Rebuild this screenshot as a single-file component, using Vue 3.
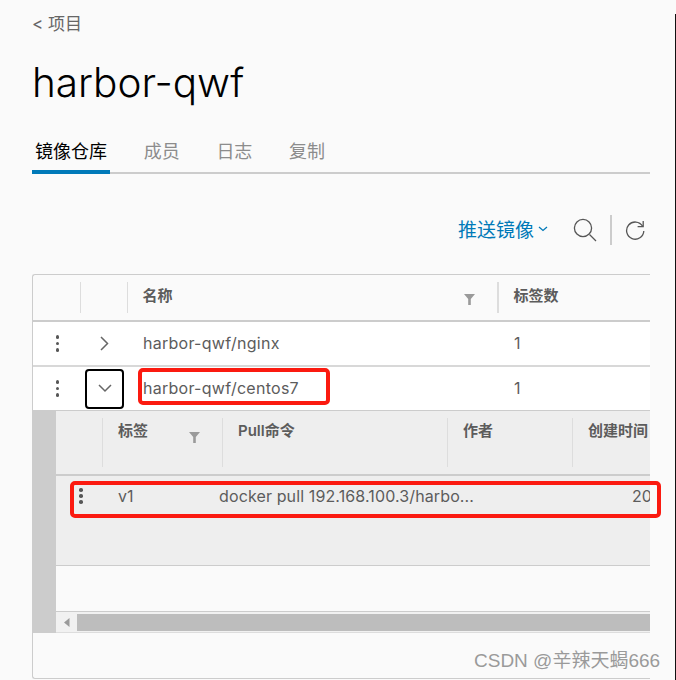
<script setup>
const tabs = ['镜像仓库', '成员', '日志', '复制']
const repos = [
  { name: 'harbor-qwf/nginx', tags: 1, open: false },
  { name: 'harbor-qwf/centos7', tags: 1, open: true },
]
</script>

<template>
  <div class="page">
    <main class="content">
      <a class="back">&lt; 项目</a>
      <h1 class="title">harbor-qwf</h1>
      <nav class="tabs">
        <span v-for="(t, i) in tabs" :key="t" class="tab" :class="{ active: i === 0 }">{{ t }}</span>
      </nav>
      <div class="toolbar">
        <span class="push">推送镜像<svg class="caret" width="10" height="6" viewBox="0 0 10 6"><path d="M1 1l4 3.5L9 1" fill="none" stroke="#0079b8" stroke-width="1.3"/></svg></span>
        <svg class="search" width="24" height="24" viewBox="0 0 24 24"><circle cx="10" cy="10" r="8.6" fill="none" stroke="#565656" stroke-width="1.3"/><path d="M16.5 16.5l6.5 6.5" stroke="#565656" stroke-width="1.3"/></svg>
        <span class="vsep"></span>
        <svg class="refresh" width="20" height="20" viewBox="0 0 20 20"><path d="M17.6 6.2A8.6 8.6 0 1 0 18.8 11" fill="none" stroke="#565656" stroke-width="1.3"/><path d="M12.6 6.6h5.6V1" fill="none" stroke="#565656" stroke-width="1.3"/></svg>
      </div>

      <section class="grid">
        <header class="head">
          <div class="hc c-act"></div>
          <div class="hc c-exp"></div>
          <div class="hc c-name">名称<svg class="filter" width="11" height="11" viewBox="0 0 11 11"><path d="M0 0h11L6.8 5v6H4.2V5z" fill="#9a9a9a"/></svg></div>
          <div class="hc c-tags">标签数</div>
        </header>
        <template v-for="r in repos" :key="r.name">
          <div class="row" :class="{ open: r.open }">
            <div class="c-act dots"><i></i><i></i><i></i></div>
            <div class="c-exp">
              <span class="exp" :class="{ focus: r.open }">
                <svg v-if="r.open" width="14" height="9" viewBox="0 0 14 9"><path d="M1 1l6 6 6-6" fill="none" stroke="#666" stroke-width="1.5"/></svg>
                <svg v-else width="9" height="15" viewBox="0 0 9 15"><path d="M1 1l6.5 6.5L1 14" fill="none" stroke="#666" stroke-width="1.5"/></svg>
              </span>
            </div>
            <div class="c-name cell">{{ r.name }}</div>
            <div class="c-tags cell">{{ r.tags }}</div>
          </div>
        </template>

        <div class="detail">
          <div class="gutter"></div>
          <div class="pane">
            <div class="d-head">
              <div class="dh d-act"></div>
              <div class="dh d-tag">标签<svg class="filter" width="11" height="11" viewBox="0 0 11 11"><path d="M0 0h11L6.8 5v6H4.2V5z" fill="#9a9a9a"/></svg></div>
              <div class="dh d-pull">Pull命令</div>
              <div class="dh d-author">作者</div>
              <div class="dh d-time">创建时间</div>
            </div>
            <div class="d-body">
              <div class="d-row">
                <div class="d-dots"><i></i><i></i><i></i></div>
                <div class="d-v">v1</div>
                <div class="d-cmd">docker pull 192.168.100.3/harbo...</div>
                <div class="d-date">20</div>
              </div>
            </div>
            <div class="d-empty"></div>
            <div class="scroll">
              <span class="arrow"><svg width="6" height="9" viewBox="0 0 6 9"><path d="M5.5 0v9L0 4.5z" fill="#9a9a9a"/></svg></span>
              <span class="thumb"></span>
            </div>
          </div>
        </div>
        <div class="foot"></div>
      </section>
    </main>

    <span class="mark m1"></span>
    <span class="mark m2"></span>
    <span class="wm">CSDN @辛辣天蝎666</span>
    <span class="edge"></span>
  </div>
</template>

<style>
html, body { margin: 0; background: #fafafa; }
</style>

<style scoped>
.page {
  position: relative;
  width: 676px;
  height: 680px;
  overflow: hidden;
  background: #fafafa;
  font-family: Inter, "Noto Sans CJK SC", sans-serif;
  color: #5c5c5c;
}
.content {
  width: 618px;
  margin-left: 32px;
  overflow: hidden;
  display: flex;
  flex-direction: column;
}
.back { margin-top: 13px; height: 22px; line-height: 22px; font-size: 17px; color: #666; }
.title {
  margin: 23px 0 0;
  height: 50px;
  line-height: 50px;
  font-size: 40.5px;
  font-weight: 300;
  color: #000;
}
.tabs {
  margin-top: 25px;
  height: 39px;
  display: flex;
  align-items: flex-start;
  border-bottom: 2px solid #ccc;
}
.tab {
  height: 41px;
  line-height: 37px;
  padding: 0 3px;
  margin-right: 30.7px;
  font-size: 18px;
  color: #8c8c8c;
  box-sizing: border-box;
}
.tab.active { color: #000; border-bottom: 4px solid #0079b8; }
.toolbar {
  margin-top: 41px;
  height: 30px;
  display: flex;
  align-items: center;
  justify-content: flex-end;
  padding-right: 5px;
}
.push { display: flex; align-items: center; font-size: 19px; color: #0079b8; padding-bottom: 3px; }
.caret { margin-left: 4px; }
.search { margin-left: 25px; }
.vsep { width: 2px; height: 30px; background: #ccc; margin-left: 13px; }
.refresh { margin-left: 13px; }

.grid {
  margin-top: 29px;
  border: 1px solid #ccc;
  border-right: 0;
  border-radius: 3px 0 0 3px;
  height: 403px;
  display: flex;
  flex-direction: column;
}
.head { height: 45px; display: flex; border-bottom: 2px solid #ccc; flex: none; }
.hc {
  position: relative;
  height: 31px;
  margin-top: 7px;
  line-height: 27px;
  font-size: 15px;
  font-weight: 600;
  box-sizing: border-box;
  border-right: 1px solid #ddd;
}
.c-act { width: 47.5px; flex: none; }
.c-exp { width: 47px; flex: none; }
.c-name { width: 371px; flex: none; }
.c-tags { flex: 1; }
.hc.c-name { padding-left: 15px; border-right: 2px solid #ddd; }
.hc.c-tags { padding-left: 15px; border: 0; }
.hc .filter { position: absolute; right: 22px; top: 12px; }
.row {
  height: 43px;
  flex: none;
  display: flex;
  align-items: center;
  background: #fff;
  border-bottom: 2px solid #d8d8d8;
}
.row.open { border-bottom: 0; }
.cell { padding-left: 15.5px; font-size: 16px; letter-spacing: .27px; line-height: 39px; box-sizing: border-box; }
.dots { display: flex; flex-direction: column; align-items: center; gap: 3px; padding-left: 1px; box-sizing: border-box; }
.dots i, .d-dots i { display: block; width: 3.5px; height: 3.5px; border-radius: 50%; background: #565656; }
.c-exp { display: flex; justify-content: center; }
.exp {
  width: 39px;
  height: 40px;
  display: flex;
  align-items: center;
  justify-content: center;
  box-sizing: border-box;
  border-radius: 4px;
  margin-left: 1px;
}
.exp.focus { border: 2px solid #000; }

.detail { display: flex; flex: none; height: 223px; }
.gutter { width: 23px; flex: none; background: #ccc; }
.pane { flex: 1; min-width: 0; display: flex; flex-direction: column; }
.d-head {
  height: 63px;
  flex: none;
  display: flex;
  background: #eee;
  border-top: 1px solid #ccc;
  border-bottom: 2px solid #ccc;
}
.dh {
  position: relative;
  height: 49px;
  margin-top: 7px;
  line-height: 26px;
  font-size: 15px;
  font-weight: 600;
  padding-left: 15px;
  box-sizing: border-box;
  border-right: 1px solid #ddd;
  flex: none;
}
.d-act { width: 47px; padding: 0; }
.d-tag { width: 120px; }
.d-tag .filter { position: absolute; right: 22px; top: 14px; }
.d-pull { width: 225px; }
.d-author { width: 125px; }
.d-time { width: 200px; border: 0; }
.d-body { height: 90px; flex: none; background: #eee; border-bottom: 1px solid #ccc; box-sizing: border-box; }
.d-row { height: 40px; display: flex; align-items: center; font-size: 16px; }
.d-dots { width: 62px; padding-left: 23px; box-sizing: border-box; display: flex; flex-direction: column; gap: 2.5px; flex: none; }
.d-v { width: 101px; flex: none; }
.d-cmd { width: 413px; flex: none; white-space: nowrap; letter-spacing: .12px; }
.d-date { flex: none; }
.d-empty { height: 45px; flex: none; }
.scroll {
  flex: none;
  display: flex;
  background: #f1f1f1;
  border-top: 1px solid #ccc;
  border-bottom: 1px solid #ddd;
  padding: 2px 0 1px;
  height: 17px;
}
.arrow { width: 21px; display: flex; align-items: center; justify-content: center; flex: none; }
.thumb { flex: 1; background: #bdbdbd; }

.mark { position: absolute; border: 4px solid #fb1a10; border-radius: 5px; box-sizing: border-box; }
.m1 { left: 138px; top: 368px; width: 192px; height: 37px; }
.m2 { left: 70px; top: 481px; width: 591px; height: 37px; }
.wm { position: absolute; left: 474px; top: 650px; font-size: 19px; line-height: 22px; color: #9a9a9a; font-family: "Liberation Sans", "Noto Sans CJK SC", sans-serif; }
.edge { position: absolute; right: 0; top: 14px; bottom: 0; width: 1px; background: #111; }
</style>
